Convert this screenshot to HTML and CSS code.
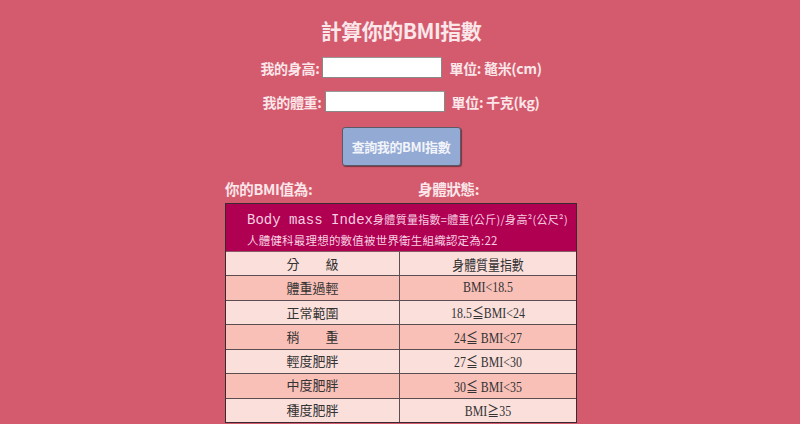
FILE: index.html
```html
<!DOCTYPE html>
<html lang="zh-Hant">
<head>
<meta charset="utf-8">
<title>計算你的BMI指數</title>
<link rel="stylesheet" href="styles.css">
</head>
<body>
<main class="page">
  <h1 class="title">計算你的BMI指數</h1>
  <div class="field">
    <label class="label">我的身高:</label>
    <input class="input" type="text">
    <span class="unit">單位: 鼇米(cm)</span>
  </div>
  <div class="field field-2">
    <label class="label">我的體重:</label>
    <input class="input" type="text">
    <span class="unit">單位: 千克(kg)</span>
  </div>
  <button class="btn" type="button">查詢我的BMI指數</button>
  <div class="results">
    <div class="result-labels">
      <span class="res res-bmi">你的BMI值為:</span>
      <span class="res">身體狀態:</span>
    </div>
    <div class="bmi-table">
      <div class="intro">
        <div class="intro-line"><span class="latin">Body mass Index</span><span class="cjk">身體質量指數=體重(公斤)/身高²(公尺²)</span></div>
        <div class="intro-line cjk2">人體健科最理想的數值被世界衛生組織認定為:22</div>
      </div>
      <div class="row light head"><div class="c1">分　　級</div><div class="c2">身體質量指數</div></div>
      <div class="row dark"><div class="c1">體重過輕</div><div class="c2">BMI&lt;18.5</div></div>
      <div class="row light"><div class="c1">正常範圍</div><div class="c2">18.5≦BMI&lt;24</div></div>
      <div class="row dark"><div class="c1">稍　　重</div><div class="c2">24≦ BMI&lt;27</div></div>
      <div class="row light"><div class="c1 up">輕度肥胖</div><div class="c2">27≦ BMI&lt;30</div></div>
      <div class="row dark"><div class="c1 up">中度肥胖</div><div class="c2">30≦ BMI&lt;35</div></div>
      <div class="row light"><div class="c1 up">種度肥胖</div><div class="c2">BMI≧35</div></div>
    </div>
  </div>
</main>
</body>
</html>
```

FILE: styles.css
```css
html, body {
  margin: 0;
  padding: 0;
  background: #d45b6d;
  overflow: hidden;
}
.page {
  display: flex;
  flex-direction: column;
  align-items: center;
  font-family: "Noto Sans CJK TC", "Noto Sans", sans-serif;
  color: #fbe6ea;
  padding-top: 15px;
  padding-left: 2px;
}
.title {
  margin: 0;
  font-size: 21px;
  line-height: 30px;
  font-weight: 700;
  letter-spacing: -0.5px;
}
.field {
  display: flex;
  align-items: center;
  gap: 3px;
  margin-top: 12px;
  font-size: 14px;
  font-weight: 700;
  letter-spacing: -0.3px;
}
.field-2 { margin-top: 13px; }
.label { display: block; }
.input {
  width: 118px;
  height: 19px;
  margin: 0 4px 0 0;
  padding: 0;
  border: 1px solid #888;
  border-top-color: #999;
  background: #fff;
}
.unit { display: block; }
.btn {
  margin-top: 15px;
  width: 119px;
  height: 39px;
  background: #93aad4;
  border: 1px solid #5a5a66;
  border-radius: 3px;
  box-shadow: 1px 1px 1px rgba(60, 30, 40, 0.6);
  color: #f2f4fa;
  font-family: "Noto Sans CJK TC", "Noto Sans", sans-serif;
  font-size: 13px;
  font-weight: 700;
  letter-spacing: -0.4px;
  padding: 0;
}
.results {
  width: 352px;
  margin-top: 13px;
}
.result-labels {
  display: flex;
  font-size: 14.5px;
  font-weight: 700;
  line-height: 20px;
  letter-spacing: -0.3px;
}
.res-bmi { width: 193px; }
.bmi-table {
  margin-top: 4px;
  border: 1px solid #3a2a30;
}
.intro {
  background: #b00052;
  color: #f6cfe0;
  padding: 3px 0 5px 21px;
  line-height: 20px;
  border-bottom: 1px solid #8a5a66;
  white-space: nowrap;
  box-sizing: border-box;
  height: 48px;
}
.latin {
  font-family: "Liberation Mono", monospace;
  font-size: 14px;
}
.cjk {
  font-family: "Noto Sans CJK TC", monospace;
  font-size: 11px;
  letter-spacing: 0.3px;
}
.cjk2 {
  font-family: "Noto Sans CJK TC", monospace;
  font-size: 11.5px;
  letter-spacing: 0.2px;
}
.row {
  display: grid;
  grid-template-columns: 174px 1fr;
  height: 23.5px;
  border-top: 1px solid #5a4e50;
  color: #333;
  font-size: 13px;
  font-family: "Liberation Serif", "Noto Sans CJK TC", serif;
}
.row.head { border-top: none; height: 23px; }
.light { background: #fbdfdb; }
.dark { background: #f9c0b8; }
.c1, .c2 {
  display: flex;
  align-items: center;
  justify-content: center;
}
.c1 { border-right: 1px solid #5a4e50; }
.c1.up { align-items: flex-start; padding-top: 1px; }
.c2 { font-size: 14px; transform: scaleX(0.85); }
```
